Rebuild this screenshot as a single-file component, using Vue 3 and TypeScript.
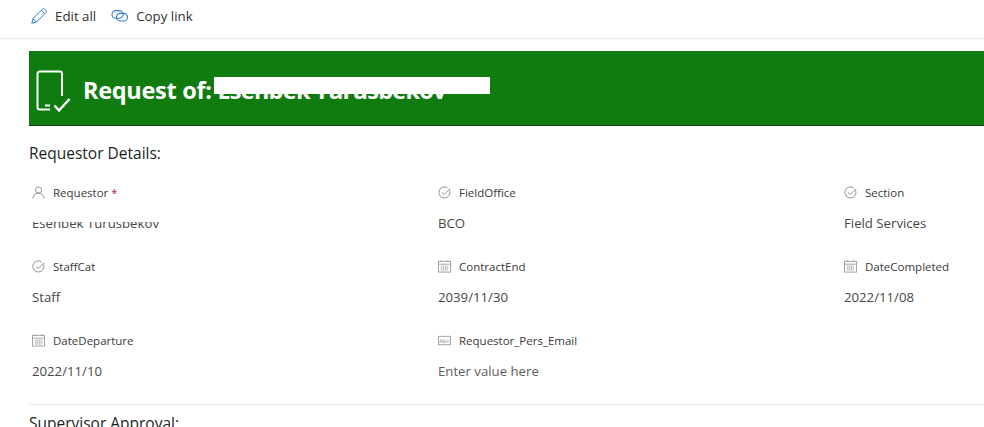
<script setup lang="ts">
type IconName = 'person' | 'choice' | 'calendar' | 'text'

interface Field {
  label: string
  value: string
  icon: IconName
  required?: boolean
  placeholder?: boolean
  masked?: boolean
}

const fields: Field[] = [
  { label: 'Requestor', value: 'Esenbek Turusbekov', icon: 'person', required: true, masked: true },
  { label: 'FieldOffice', value: 'BCO', icon: 'choice' },
  { label: 'Section', value: 'Field Services', icon: 'choice' },
  { label: 'StaffCat', value: 'Staff', icon: 'choice' },
  { label: 'ContractEnd', value: '2039/11/30', icon: 'calendar' },
  { label: 'DateCompleted', value: '2022/11/08', icon: 'calendar' },
  { label: 'DateDeparture', value: '2022/11/10', icon: 'calendar' },
  { label: 'Requestor_Pers_Email', value: 'Enter value here', icon: 'text', placeholder: true },
]
</script>

<template>
  <div class="page">
    <div class="command-bar">
      <button class="command">
        <svg class="command-icon" viewBox="0 0 16 16" fill="none" stroke="#2b7cd3" stroke-width="1">
          <path d="M0.800 15.200l1.100-4.500L11.500 1.100a1.500 1.500 0 0 1 2.100 0l1.300 1.300a1.500 1.500 0 0 1 0 2.100L5.300 14.100z" />
          <path d="M1.900 10.700l3.400 3.400M10.300 2.300l3.400 3.400" />
        </svg>
        Edit all
      </button>
      <button class="command">
        <svg class="command-icon link-icon" viewBox="0 0 17 12" fill="none" stroke="#2b7cd3" stroke-width="1.100">
          <rect x="1" y="0.600" width="11" height="7.600" rx="3.800" />
          <rect x="5.500" y="3.400" width="11" height="7.600" rx="3.800" />
        </svg>
        Copy link
      </button>
    </div>

    <div class="content">
      <div class="banner">
        <svg class="banner-icon" viewBox="0 0 36 44" fill="none" stroke="#fff" stroke-width="2">
          <path d="M14 40.500H3.500a2 2 0 0 1-2-2V4.500a2 2 0 0 1 2-2H24a2 2 0 0 1 2 2V27" />
          <path d="M9 36.500h5" />
          <path d="M18.500 36.500l4.500 5L33.500 30" stroke-width="2.500" />
        </svg>
        <span class="banner-title">Request of: <span class="banner-name">Esenbek Turusbekov</span></span>
        <span class="redaction"></span>
      </div>

      <h2 class="section-title">Requestor Details:</h2>

      <div class="field-grid">
        <div v-for="field in fields" :key="field.label" class="field">
          <div class="field-label">
            <svg v-if="field.icon === 'person'" class="field-icon" viewBox="0 0 14 14" fill="none" stroke="#8a8886">
              <circle cx="7" cy="4.300" r="3.300" />
              <path d="M1 13.500c0-3.300 2.700-5.800 6-5.800s6 2.500 6 5.800" />
            </svg>
            <svg v-else-if="field.icon === 'choice'" class="field-icon" viewBox="0 0 14 14" fill="none" stroke="#8a8886">
              <path d="M12.500 4.800A6 6 0 1 1 10.300 2" />
              <path d="M4.300 6.800l2.400 2.400L13 2.900" />
            </svg>
            <svg v-else-if="field.icon === 'calendar'" class="field-icon" viewBox="0 0 14 14" fill="none" stroke="#a19f9d">
              <rect x="0.500" y="1.500" width="13" height="11.500" />
              <path d="M0.500 4.500h13M3.500 0v1.500M10.500 0v1.500" />
              <path d="M3.500 6.500h7v4.500h-7zM3.500 8.700h7M5.800 6.500V11M8.200 6.500V11" stroke="#b3b0ad" stroke-width="0.700" />
            </svg>
            <svg v-else class="field-icon" viewBox="0 0 14 14" fill="none" stroke="#a19f9d">
              <rect x="0.500" y="2.500" width="13" height="9" />
              <text x="7" y="9.500" class="abc-text">Abc</text>
            </svg>
            <span>{{ field.label }}</span>
            <span v-if="field.required" class="required">*</span>
          </div>
          <div class="field-value" :class="{ placeholder: field.placeholder, masked: field.masked }">
            {{ field.value }}
          </div>
        </div>
      </div>

      <div class="divider"></div>
      <h2 class="section-title next">Supervisor Approval:</h2>
    </div>
  </div>
</template>

<style>
html,
body {
  margin: 0;
  overflow: hidden;
  background: #fff;
}
</style>

<style scoped>
.page {
  width: 984px;
  height: 427px;
  overflow: hidden;
  font-family: 'Open Sans', 'Noto Sans', sans-serif;
  color: #323130;
}

.command-bar {
  display: flex;
  align-items: center;
  height: 32px;
  padding-left: 31px;
  padding-bottom: 6px;
  border-bottom: 1px solid #edebe9;
}

.command {
  display: flex;
  align-items: center;
  gap: 8px;
  padding: 0;
  border: none;
  background: none;
  font-family: inherit;
  font-size: 13.300px;
  color: #323130;
}

.command + .command {
  margin-left: 15px;
}

.command-icon {
  width: 16px;
  height: 16px;
}

.link-icon {
  width: 17px;
  height: 12px;
}

.content {
  width: 1300px;
  padding: 12px 0 0 29px;
}

.banner {
  position: relative;
  display: flex;
  align-items: center;
  height: 74px;
  padding-left: 7px;
  background: #107c10;
  border-bottom: 1px solid #1b3a1b;
}

.banner-icon {
  width: 36px;
  height: 44px;
  margin-top: 6px;
}

.banner-title {
  margin-left: 11px;
  margin-top: 3px;
  font-size: 23.500px;
  font-weight: 700;
  color: #fff;
  letter-spacing: -0.300px;
}

.banner-name {
  letter-spacing: -0.750px;
}

.redaction {
  position: absolute;
  top: 26px;
  left: 185px;
  width: 276px;
  height: 17px;
  background: #fff;
}

.section-title {
  margin: 16px 0 0;
  font-size: 15.500px;
  font-weight: 400;
  line-height: 22px;
  color: #201f1e;
}

.section-title.next {
  margin-top: 7px;
}

.field-grid {
  display: grid;
  grid-template-columns: repeat(3, 406px);
  grid-auto-rows: 74px;
  margin-top: 18px;
  padding-left: 1px;
}

.field-label {
  display: flex;
  align-items: center;
  height: 20px;
  font-size: 11.500px;
  font-weight: 500;
  color: #3b3a39;
}

.field-icon {
  flex: none;
  width: 13px;
  height: 13px;
  margin: 0 8px 0 2px;
}

.abc-text {
  font-size: 6.500px;
  fill: #8a8886;
  stroke: none;
  text-anchor: middle;
}

.required {
  margin-left: 3px;
  color: #a4262c;
  font-size: 11px;
  font-weight: 400;
}

.field-value {
  margin-top: 10px;
  padding-left: 2px;
  font-size: 13.200px;
  line-height: 22px;
  height: 22px;
  color: #484644;
}

.field-value.placeholder {
  color: #605e5c;
}

/* top of the value is cut off in the source */
.field-value.masked {
  position: relative;
  overflow: hidden;
}

.field-value.masked::before {
  content: '';
  position: absolute;
  top: 0;
  left: 0;
  right: 0;
  height: 10px;
  background: #fff;
}

.divider {
  height: 1px;
  background: #edebe9;
}
</style>
